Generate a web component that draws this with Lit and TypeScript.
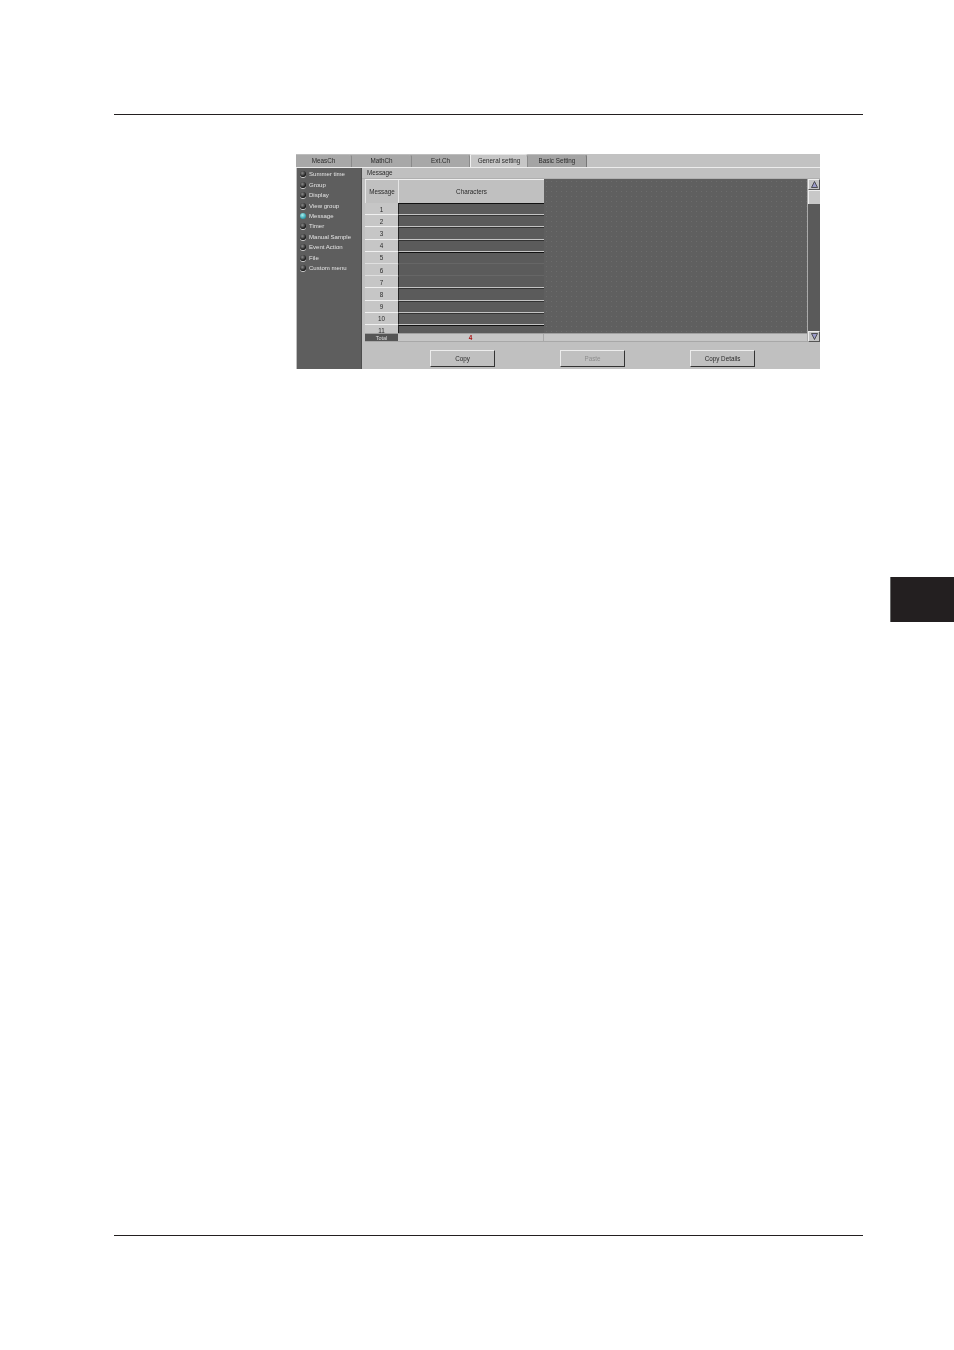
import { LitElement, html, css } from "lit";
import { customElement } from "lit/decorators.js";

const TABS = [
  ["MeasCh", 56, ""],
  ["MathCh", 60, ""],
  ["Ext.Ch", 58, ""],
  ["General setting", 58, "active"],
  ["Basic Setting", 59, "basic"],
] as const;
const MENU = ["Summer time", "Group", "Display", "View group", "Message", "Timer", "Manual Sample", "Event Action", "File", "Custom menu"];
const ROWS = ["1", "2", "3", "4", "5", "6", "7", "8", "9", "10", "11"];
const FAINT = new Set(["5", "6"]);
const SOFT_TOP = new Set(["6", "7"]);
const STRONG = new Set(["1", "5", "11"]);

@customElement("app-root")
export class AppRoot extends LitElement {
  static styles = css`
    :host { display: block; width: 954px; height: 1350px; background: #fff; overflow: hidden; font-family: "Liberation Sans", Arial, sans-serif; }
    .page { display: flex; flex-direction: column; height: 1350px; }
    .rule { height: 1px; margin-left: 114px; width: 749px; background: #231f20; flex: none; }
    .rule.top { margin-top: 114px; }
    .rule.bottom { margin-top: 613px; }
    .shot { margin: 39px 0 0 296px; width: 524px; height: 215px; background: #c0c0c0; display: flex; flex-direction: column; flex: none; font-size: 6.3px; color: #2a2a2a; overflow: hidden; filter: blur(0.35px); }
    .thumb { width: 64px; height: 45px; flex: none; margin: 208px 0 0 890px; background: #231f20; border-left: 1px solid #6a6a6a; box-sizing: border-box; }
    .tabs { display: flex; height: 13px; flex: none; background: #c2c2c2; }
    .tab { display: flex; align-items: center; justify-content: center; background: #a8a8a8; border-right: 1px solid #8a8a8a; border-top: 1px solid #bdbdbd; box-sizing: border-box; padding-bottom: 1px; border-top-right-radius: 3px; }
    .tab.active { background: #c6c6c6; border-top-color: #e4e4e4; border-left: 1px solid #f0f0f0; }
    .tab.basic { background: #a4a4a4; border-right: 1px solid #777; }
    .sep { height: 1px; background: #ececec; flex: none; }
    .body { display: flex; flex: 1; min-height: 0; padding-left: 1px; }
    .side { width: 65px; flex: none; background: #5e5e5e; border-right: 1px solid #4c4c4c; box-sizing: border-box; padding-top: 1px; color: #e4e4e4; font-size: 6.05px; }
    .item { height: 10.45px; display: flex; align-items: center; gap: 3.5px; padding-left: 2.5px; white-space: nowrap; }
    .led { width: 6px; height: 6px; border-radius: 50%; flex: none; background: radial-gradient(circle at 40% 35%, #8c8c8c, #1c1c1c 65%); box-shadow: 0 1px 0 #cfcfcf; }
    .led.on { background: radial-gradient(circle at 40% 35%, #a8f0f0, #2c9aa8 70%); box-shadow: none; }
    .main { flex: 1; min-width: 0; display: flex; flex-direction: column; }
    .title { height: 11px; flex: none; padding: 0 0 2px 5px; box-sizing: border-box; display: flex; align-items: center; border-bottom: 1px solid #b0b0b0; }
    .panel { margin-left: 3px; height: 163px; flex: none; display: flex; }
    .tablewrap { flex: 1; min-width: 0; display: flex; flex-direction: column; }
    .grid { flex: 1; min-height: 0; display: flex; overflow: hidden; }
    .cols { width: 179px; flex: none; display: flex; flex-direction: column; overflow: hidden; }
    .hdr { height: 24px; flex: none; display: flex; border-top: 1px solid #f0f0f0; box-sizing: border-box; }
    .hdr div { display: flex; align-items: center; justify-content: center; background: #c0c0c0; box-sizing: border-box; }
    .c1 { width: 33px; flex: none; }
    .c2 { flex: 1; border-left: 1px solid #e6e6e6; }
    .hdr .c1 { border-left: 1px solid #e6e6e6; }
    .row { height: 12.2px; flex: none; display: flex; box-sizing: border-box; }
    .row .c1 { display: flex; align-items: center; justify-content: center; padding-top: 1px; background: #c6c6c6; border-bottom: 1px solid #f0f0f0; box-sizing: border-box; }
    .row .c2 { background: #5b5b5b; border-left: 1px solid #222; border-top: 1px solid #333; border-bottom: 1px solid #c4c4c4; box-sizing: border-box; }
    .row.faint .c2 { border-bottom-color: #666; }
    .row.faint .c1 { border-bottom-color: #e0e0e0; }
    .row.softtop .c2 { border-top-color: #5b5b5b; }
    .row.strong .c2 { border-top-color: #111; }
    .dots { flex: 1; background-color: #5f5f5f; background-image: radial-gradient(circle, #6c6c6c 0.7px, transparent 1px); background-size: 5px 5px; }
    .total { height: 9px; flex: none; display: flex; background: #c6c6c6; border-bottom: 1px solid #a8a8a8; box-sizing: border-box; border-top: 1px solid #a0a0a0; }
    .total .lab { width: 33px; flex: none; background: #555; color: #ddd; display: flex; align-items: center; justify-content: center; font-size: 5.5px; }
    .total .val { width: 146px; flex: none; color: #a11; display: flex; align-items: center; justify-content: center; font-weight: bold; border-right: 1px solid #a8a8a8; box-sizing: border-box; }
    .scroll { width: 13px; flex: none; display: flex; flex-direction: column; background: #5a5a5a; border-left: 1px solid #aaa; box-sizing: border-box; }
    .sbtn { height: 11px; flex: none; background: #c4c4c4; border: 1px solid #eee; border-right-color: #555; border-bottom-color: #555; box-sizing: border-box; display: flex; align-items: center; justify-content: center; }
    .sthumb { height: 14px; flex: none; background: #c8c8c8; border-top: 1px solid #eee; border-left: 1px solid #eee; box-sizing: border-box; }
    .strack { flex: 1; }
    .foot { flex: 1; display: flex; justify-content: space-between; padding: 8px 65px 1px 68px; box-sizing: border-box; }
    .btn { width: 65px; height: 17px; background: #c0c0c0; border: 1px solid #ededed; border-right: 1px solid #333; border-bottom: 1px solid #333; box-sizing: border-box; display: flex; align-items: center; justify-content: center; }
    .btn.off { color: #8e8e8e; }
  `;

  render() {
    return html`<div class="page">
      <div class="rule top"></div>
      <div class="shot">
        <div class="tabs">
          ${TABS.map(([t, w, k]) => html`<div class="tab ${k}" style="width:${w}px">${t}</div>`)}
        </div>
        <div class="sep"></div>
        <div class="body">
          <div class="side">
            ${MENU.map((m) => html`<div class="item"><span class="led ${m === "Message" ? "on" : ""}"></span>${m}</div>`)}
          </div>
          <div class="main">
            <div class="title">Message</div>
            <div class="panel">
              <div class="tablewrap">
                <div class="grid">
                  <div class="cols">
                    <div class="hdr"><div class="c1">Message</div><div class="c2">Characters</div></div>
                    ${ROWS.map((r) => html`<div class="row ${FAINT.has(r) ? "faint" : ""} ${SOFT_TOP.has(r) ? "softtop" : ""} ${STRONG.has(r) ? "strong" : ""}"><div class="c1">${r}</div><div class="c2"></div></div>`)}
                  </div>
                  <div class="dots"></div>
                </div>
                <div class="total"><div class="lab">Total</div><div class="val">4</div></div>
              </div>
              <div class="scroll">
                <div class="sbtn"><svg width="7" height="7" viewBox="0 0 7 7"><path d="M3.5 0.5 L6.5 6.5 H0.5 Z" fill="#9a9ac8" stroke="#333" stroke-width="0.8"/></svg></div>
                <div class="sthumb"></div>
                <div class="strack"></div>
                <div class="sbtn"><svg width="7" height="7" viewBox="0 0 7 7"><path d="M3.5 6.5 L6.5 0.5 H0.5 Z" fill="#9a9ac8" stroke="#333" stroke-width="0.8"/></svg></div>
              </div>
            </div>
            <div class="foot">
              <div class="btn">Copy</div>
              <div class="btn off">Paste</div>
              <div class="btn">Copy Details</div>
            </div>
          </div>
        </div>
      </div>
      <div class="thumb"></div>
      <div class="rule bottom"></div>
    </div>`;
  }
}
